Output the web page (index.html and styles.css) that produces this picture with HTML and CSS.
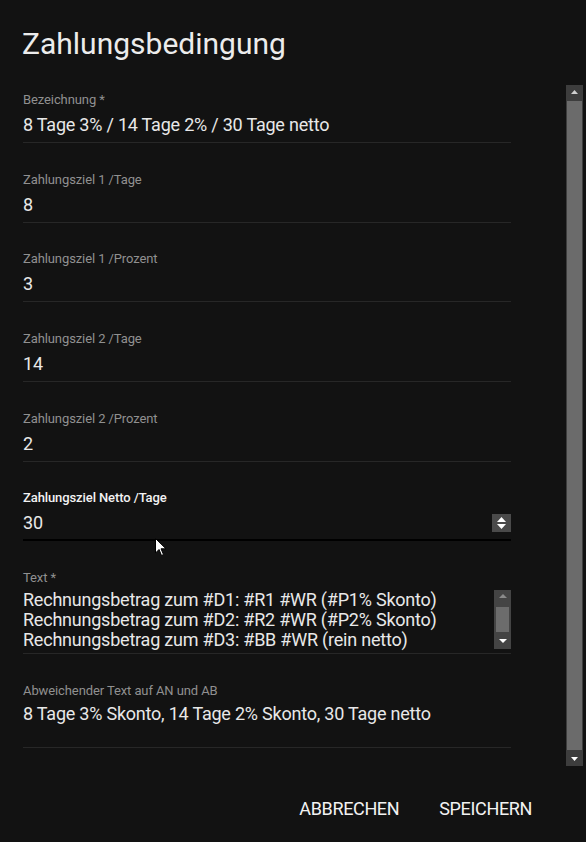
FILE: index.html
```html
<!DOCTYPE html>
<html lang="de">

<head>
  <meta charset="UTF-8">
  <meta name="viewport" content="width=device-width, initial-scale=1.0">
  <title>Zahlungsbedingung</title>
  <link rel="stylesheet" href="styles.css">
</head>

<body>
  <div class="dialog">
    <h1 class="dialog-title">Zahlungsbedingung</h1>

    <div class="dialog-body">
      <form class="fields">
        <div class="field">
          <label>Bezeichnung *</label>
          <div class="value">8 Tage 3% / 14 Tage 2% / 30 Tage netto</div>
        </div>
        <div class="field">
          <label>Zahlungsziel 1 /Tage</label>
          <div class="value">8</div>
        </div>
        <div class="field">
          <label>Zahlungsziel 1 /Prozent</label>
          <div class="value">3</div>
        </div>
        <div class="field">
          <label>Zahlungsziel 2 /Tage</label>
          <div class="value">14</div>
        </div>
        <div class="field">
          <label>Zahlungsziel 2 /Prozent</label>
          <div class="value">2</div>
        </div>
        <!-- aktives Feld mit Spinner -->
        <div class="field field-active">
          <label>Zahlungsziel Netto /Tage</label>
          <div class="value">
            <span>30</span>
            <span class="spinner">
              <svg width="19" height="18" viewBox="0 0 19 18">
                <path d="M9.5 3 L14 8 L5 8 Z" fill="#fff" />
                <path d="M9.5 15 L14 10 L5 10 Z" fill="#fff" />
              </svg>
            </span>
          </div>
          <svg class="cursor" width="12" height="19" viewBox="0 0 12 19">
            <path d="M0.5 0.5 L0.5 15 L4 11.5 L6.5 17.5 L8.5 16.5 L6 10.8 L11 10.8 Z" fill="#fff" stroke="#000" stroke-width="1" />
          </svg>
        </div>
        <div class="field field-multi">
          <label>Text *</label>
          <div class="value">
            <div class="lines">
              Rechnungsbetrag zum #D1: #R1 #WR (#P1% Skonto)<br>
              Rechnungsbetrag zum #D2: #R2 #WR (#P2% Skonto)<br>
              Rechnungsbetrag zum #D3: #BB #WR (rein netto)
            </div>
            <div class="mini-scroll">
              <span class="mini-btn">
                <svg width="14" height="14" viewBox="0 0 14 14"><path d="M7 4 L11 8 L3 8 Z" fill="#8a8a8a" /></svg>
              </span>
              <span class="mini-thumb"></span>
              <span class="mini-btn">
                <svg width="14" height="14" viewBox="0 0 14 14"><path d="M7 10 L11 6 L3 6 Z" fill="#fff" /></svg>
              </span>
            </div>
          </div>
        </div>
        <div class="field field-multi field-last">
          <label>Abweichender Text auf AN und AB</label>
          <div class="value">
            <div class="lines">8 Tage 3% Skonto, 14 Tage 2% Skonto, 30 Tage netto</div>
          </div>
        </div>
      </form>

      <div class="scrollbar">
        <span class="sb-btn">
          <svg width="17" height="16" viewBox="0 0 17 16"><path d="M8.5 5 L12 9 L5 9 Z" fill="#cfcfcf" /></svg>
        </span>
        <span class="sb-thumb"></span>
        <span class="sb-btn">
          <svg width="17" height="16" viewBox="0 0 17 16"><path d="M8.5 11 L12 7 L5 7 Z" fill="#fff" /></svg>
        </span>
      </div>
    </div>

    <div class="actions">
      <button type="button">ABBRECHEN</button>
      <button type="button">SPEICHERN</button>
    </div>
  </div>
</body>

</html>
```

FILE: styles.css
```css
* {
  margin: 0;
  padding: 0;
}

*,
*::before,
*::after {
  box-sizing: border-box;
}

body {
  background: #121212;
  color: #e6e6e6;
  font-family: Roboto, "Liberation Sans", sans-serif;
  height: 100vh;
  overflow: hidden;
}

/* Dialog */
.dialog {
  display: flex;
  flex-direction: column;
  height: 100%;
}

.dialog-title {
  font-size: 30px;
  font-weight: 400;
  line-height: 32px;
  color: #ececec;
  padding: 28px 22px 0;
  margin-bottom: 25px;
}

.dialog-body {
  display: flex;
  height: 681px;
}

/* Felder */
.fields {
  width: 511px;
  padding: 7px 0 0 23px;
}

.field {
  position: relative;
  border-bottom: 1px solid #272727;
  margin-bottom: 28.7px;
  padding-bottom: 7px;
}

.field label {
  display: block;
  font-size: 13px;
  line-height: 16px;
  letter-spacing: -0.1px;
  color: #909090;
}

.field .value {
  display: flex;
  justify-content: space-between;
  align-items: center;
  margin-top: 7px;
  font-size: 18px;
  line-height: 20px;
  letter-spacing: -0.22px;
  color: #e8e8e8;
}

.field-active {
  border-bottom: 2px solid #000;
  padding-bottom: 6px;
}

.field-active label {
  color: #f2f2f2;
  font-weight: 500;
}

.spinner {
  display: flex;
  width: 19px;
  height: 18px;
  background: #4a4a4a;
}

.cursor {
  position: absolute;
  left: 132px;
  bottom: -18px;
}

.field-multi {
  padding-bottom: 3px;
}

.field-multi .value {
  margin-top: 4px;
  align-items: flex-start;
}

.field-multi .lines {
  height: 60px;
  line-height: 20px;
}

.field-last .value {
  margin-top: 5px;
}

.field-last .lines {
  height: 40px;
}

/* kleine Bildlaufleiste im Textfeld */
.mini-scroll {
  display: flex;
  flex-direction: column;
  flex-shrink: 0;
  width: 17px;
  height: 59px;
  background: #444;
}

.mini-btn {
  display: flex;
  justify-content: center;
  height: 16px;
}

.mini-thumb {
  height: 25px;
  margin: 1px 2px;
  background: #6c6c6c;
}

/* Bildlaufleiste rechts */
.scrollbar {
  display: flex;
  flex-direction: column;
  width: 17px;
  margin-left: auto;
  margin-right: 3px;
  background: #3d3d3d;
}

.sb-btn {
  display: flex;
  height: 16px;
}

.sb-thumb {
  flex: 1;
  margin: 0 1px;
  background: #6b6b6b;
}

/* Aktionen */
.actions {
  display: flex;
  justify-content: flex-end;
  gap: 24px;
  padding: 25px 46px 0 0;
}

.actions button {
  background: none;
  border: none;
  color: #f2f2f2;
  font-family: Roboto, "Liberation Sans", sans-serif;
  font-size: 18px;
  letter-spacing: -0.35px;
  line-height: 36px;
  padding: 0 8px;
  cursor: pointer;
}
```
